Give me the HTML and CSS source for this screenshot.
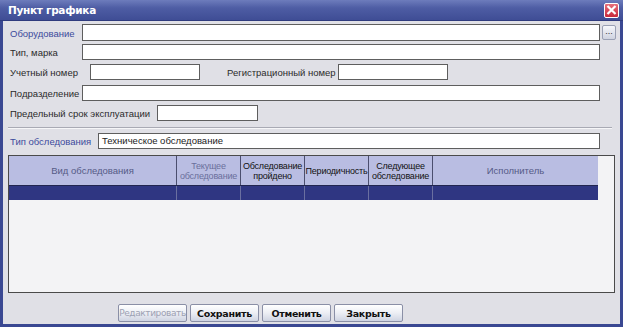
FILE: index.html
```html
<!DOCTYPE html>
<html lang="ru">
<head>
<meta charset="utf-8">
<title>Пункт графика</title>
<link rel="stylesheet" href="styles.css">
</head>
<body>
<div class="window">
  <div class="titlebar">
    <span class="title">Пункт графика</span>
    <span class="close"><svg width="13" height="12" viewBox="0 0 13 12"><path d="M2.5 2 L10.5 10 M10.5 2 L2.5 10" stroke="#fff" stroke-width="2.2"/></svg></span>
  </div>
  <div class="body">
    <div class="row r1">
      <span class="lbl blue w74">Оборудование</span>
      <span class="inp grow"></span>
      <span class="dots">...</span>
    </div>
    <div class="row r2">
      <span class="lbl w74">Тип, марка</span>
      <span class="inp grow"></span>
      <span class="spacer"></span>
    </div>
    <div class="row r3">
      <span class="lbl w82">Учетный номер</span>
      <span class="inp w110"></span>
      <span class="lbl reg">Регистрационный номер</span>
      <span class="inp w110"></span>
    </div>
    <div class="row r4">
      <span class="lbl w74">Подразделение</span>
      <span class="inp grow"></span>
      <span class="spacer"></span>
    </div>
    <div class="row r5">
      <span class="lbl w149">Предельный срок эксплуатации</span>
      <span class="inp w100"></span>
    </div>
    <div class="sep"></div>
    <div class="row r6">
      <span class="lbl blue w90">Тип обследования</span>
      <span class="inp grow val">Техническое обследование</span>
      <span class="spacer"></span>
    </div>
    <div class="grid">
      <div class="ghead">
        <div class="gc c1 muted">Вид обследования</div>
        <div class="gc c2 muted2">Текущее обследование</div>
        <div class="gc c3">Обследование пройдено</div>
        <div class="gc c4">Периодичность</div>
        <div class="gc c5">Следующее обследование</div>
        <div class="gc c6 muted">Исполнитель</div>
      </div>
      <div class="gsel">
        <div class="gs c1"></div>
        <div class="gs c2"></div>
        <div class="gs c3"></div>
        <div class="gs c4"></div>
        <div class="gs c5"></div>
        <div class="gs c6"></div>
      </div>
    </div>
    <div class="buttons">
      <span class="btn dis">Редактировать</span>
      <span class="btn">Сохранить</span>
      <span class="btn">Отменить</span>
      <span class="btn">Закрыть</span>
    </div>
  </div>
</div>
</body>
</html>
```
FILE: styles.css
```css
* { box-sizing: border-box; }
html, body { margin: 0; padding: 0; }
body {
  width: 623px;
  height: 327px;
  overflow: hidden;
  font-family: "Liberation Sans", Arial, sans-serif;
  font-size: 9.5px;
  color: #222;
  background: #3a4892;
}
.window {
  width: 623px;
  height: 327px;
  display: flex;
  flex-direction: column;
}
.titlebar {
  height: 21px;
  flex: none;
  display: flex;
  align-items: center;
  justify-content: space-between;
  padding: 0 4px 0 8px;
  background: linear-gradient(to bottom, #6d7cbc 0%, #4e5da4 40%, #3f4d95 100%);
  border-bottom: 1px solid #2f3b7e;
}
.title {
  color: #fff;
  font-family: "DejaVu Sans", sans-serif;
  font-weight: bold;
  font-size: 10.5px;
  letter-spacing: -0.3px;
}
.close {
  width: 15px;
  height: 15px;
  background: linear-gradient(to bottom, #e8707c, #c8283a);
  border: 1px solid #fff;
  border-radius: 2px;
  display: flex;
  align-items: center;
  justify-content: center;
}
.body {
  flex: 1;
  background: #e0e0e6;
  margin: 0 3px 3px 3px;
  padding: 3px 4px 0 5px;
  display: flex;
  flex-direction: column;
}
.row {
  display: flex;
  align-items: center;
}
.lbl { flex: none; white-space: nowrap; padding-left: 2px; color: #2b2b2b; padding-top: 1px; }
.blue { color: #3c4a9c; }
.w74 { width: 74px; }
.w82 { width: 82px; }
.w90 { width: 90px; }
.w149 { width: 149px; }
.inp {
  height: 16px;
  background: #fff;
  border: 1px solid #5e5e5e;
  flex: none;
}
.grow { flex: 1; }
.w110 { width: 110px; }
.w100 { width: 101px; }
.val { padding-left: 3px; line-height: 14px; color: #222; }
.reg { margin-left: 25px; width: 113px; }
.spacer { width: 16px; flex: none; }
.dots {
  width: 14px;
  height: 15px;
  margin-left: 2px;
  flex: none;
  border: 1px solid #9aa0b4;
  border-radius: 2px;
  background: linear-gradient(to bottom, #f6f7fb, #cfd3e0);
  font-size: 9px;
  line-height: 10px;
  text-align: center;
  color: #333;
}
.r1 { height: 17px; margin-top: 0; }
.r1 .inp { height: 17px; }
.r2 { margin-top: 3px; }
.r3 { margin-top: 4px; }
.r4 { margin-top: 5px; }
.r5 { margin-top: 4px; }
.sep {
  margin: 6px 4px 0 0;
  height: 2px;
  border-top: 1px solid #a9aab4;
  border-bottom: 1px solid #f6f6f8;
}
.r6 { margin-top: 4px; }
.grid {
  margin-top: 6px;
  margin-right: 1px;
  height: 138px;
  background: #f3f3f5;
  border: 1px solid #4a4a4a;
  padding-right: 16px;
}
.ghead, .gsel { display: flex; }
.ghead { height: 29px; background: #b9bde2; }
.gc {
  height: 29px;
  display: flex;
  align-items: center;
  justify-content: center;
  text-align: center;
  line-height: 10px;
  font-size: 9px;
  letter-spacing: -0.2px;
  color: #111;
  border-right: 1px solid #4b4e6e;
  overflow: hidden;
  white-space: normal;
}
.gc.c6 { border-right: none; font-size: 9.5px; letter-spacing: 0; }
.gc.c1 { font-size: 9.5px; letter-spacing: 0; }
.muted { color: #555a86; }
.muted2 { color: #6a6f9c; }
.c1 { width: 168px; }
.c2 { width: 64px; }
.c3 { width: 64px; }
.c4 { width: 64px; }
.c5 { width: 64px; }
.c6 { flex: 1; }
.gsel { height: 15px; background: #2f3682; border-top: 1px solid #222650; }
.gs { height: 14px; border-right: 1px solid #6a6fa0; }
.gs.c6 { border-right: none; }
.buttons {
  margin-top: 11px;
  display: flex;
  gap: 3px;
  padding-left: 110px;
}
.btn {
  width: 69px;
  height: 18px;
  border: 1px solid #8a8fa6;
  border-radius: 2px;
  background: linear-gradient(to bottom, #ffffff 0%, #eceef4 50%, #cfd4e2 100%);
  display: flex;
  align-items: center;
  justify-content: center;
  font-family: "DejaVu Sans", sans-serif;
  font-weight: bold;
  font-size: 9.5px;
  letter-spacing: -0.3px;
  color: #111;
}
.btn.dis { color: #9da1b3; font-weight: normal; font-size: 9px; letter-spacing: -0.4px; }
```
